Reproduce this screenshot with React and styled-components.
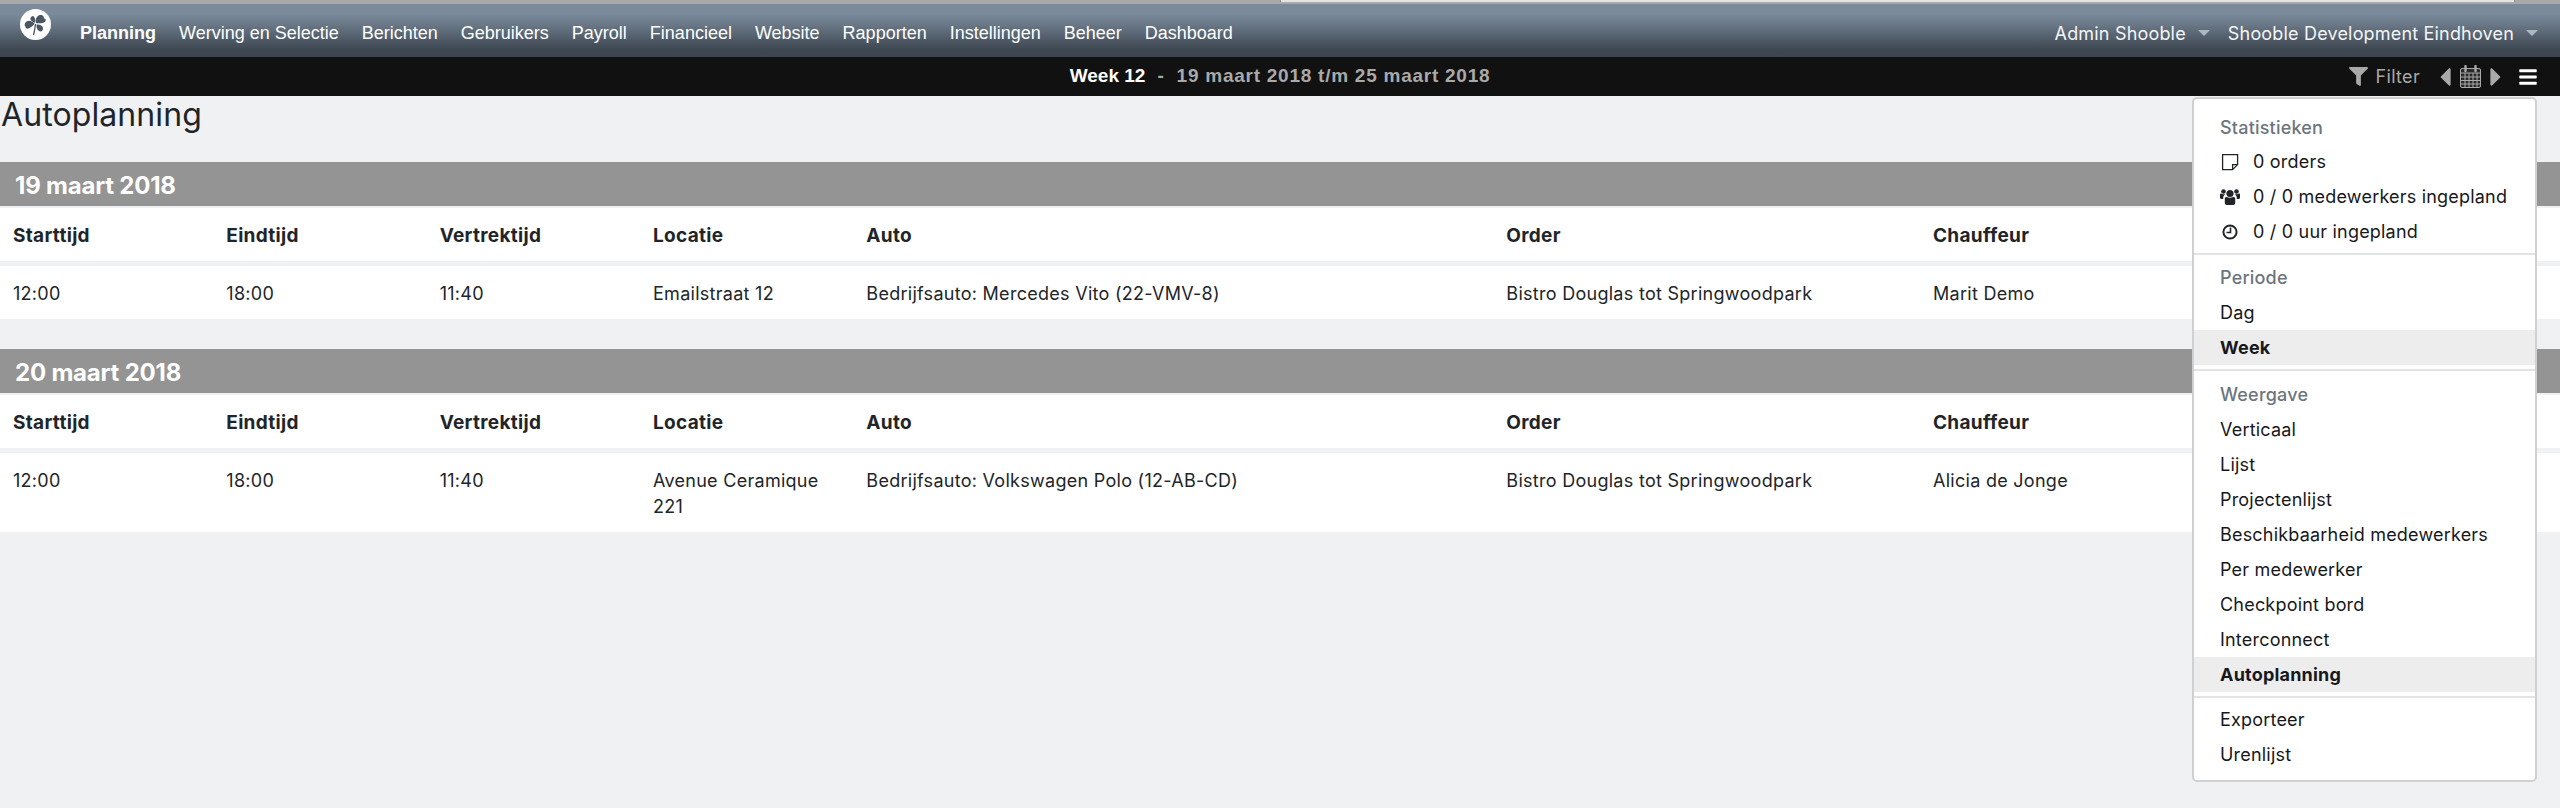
import React from "react";
import styled, { createGlobalStyle } from "styled-components";
import { FaFilter, FaCaretLeft, FaCaretRight, FaBars } from "react-icons/fa";

const GlobalStyle = createGlobalStyle`
  html, body {
    margin: 0;
    padding: 0;
    background: #f0f1f3;
    font-family: Inter, "Noto Sans", sans-serif;
    color: #212529;
  }
`;

const Page = styled.div`
  position: relative;
  height: 808px;
  overflow: hidden;
  background: #f0f1f3;
`;

const BrowserEdge = styled.div`
  display: flex;
  height: 4px;
  background: #a9a9a9;
`;

const EdgeTab = styled.div`
  margin-left: 1280px;
  width: 1233px;
  height: 2px;
  background: #e4e4e4;
  border-left: 1px solid #8f8f8f;
  border-right: 1px solid #8f8f8f;
`;

const NavBar = styled.nav`
  display: flex;
  align-items: center;
  height: 53px;
  padding: 0 22px 0 20px;
  background: linear-gradient(to bottom, #7b8b9c 0%, #7a8a9b 20%, #56626f 60%, #3f4852 85%, #3d4650 100%);
`;

const Logo = styled.svg`
  width: 31px;
  height: 31px;
  margin: -12px 29px 0 0;
`;

const NavLink = styled.a`
  font-family: "Liberation Sans", Arial, sans-serif;
  font-size: 18px;
  font-weight: ${(p) => (p.$active ? 700 : 400)};
  color: #fff;
  margin-right: 23px;
  padding-top: 6px;
`;

const UserArea = styled.div`
  display: flex;
  align-items: center;
  margin-left: auto;
  gap: 18px;
  padding-top: 5px;
`;

const UserMenu = styled.div`
  display: flex;
  align-items: center;
  gap: 12px;
  font-size: 18px;
  letter-spacing: 0.18px;
  color: #f4f5f6;
`;

const Caret = styled.span`
  width: 0;
  height: 0;
  border-left: 6px solid transparent;
  border-right: 6px solid transparent;
  border-top: 6px solid #b0b6bd;
`;

const SubBar = styled.div`
  position: relative;
  display: flex;
  align-items: center;
  justify-content: center;
  height: 39px;
  background: #111;
`;

const WeekTitle = styled.div`
  font-family: "Liberation Sans", Arial, sans-serif;
  font-size: 19px;
  font-weight: 700;
  color: #a9a9a9;
  white-space: pre;
  letter-spacing: 0.75px;
  padding-bottom: 2px;
`;

const WeekStrong = styled.span`
  color: #fff;
  letter-spacing: 0;
`;

const SubTools = styled.div`
  position: absolute;
  right: 22px;
  top: 0;
  bottom: 0;
  display: flex;
  align-items: center;
  color: #a9a9a9;
`;

const FilterLabel = styled.span`
  font-size: 18px;
  letter-spacing: 0.3px;
  margin: 0 12px 0 8px;
  color: #a9a9a9;
`;

const ToolIcon = styled.span`
  display: flex;
  color: ${(p) => p.$color || "#a9a9a9"};
  margin: ${(p) => p.$margin || "0"};
`;

const Title = styled.h1`
  margin: 0;
  padding: 0 0 0 1px;
  height: 66px;
  font-size: 32px;
  font-weight: 400;
  line-height: 38px;
  letter-spacing: 0.1px;
  color: #212529;
`;

const DayBlock = styled.section`
  margin-bottom: 30px;
`;

const DayHeader = styled.h2`
  margin: 0 0 2px;
  height: 44px;
  padding-left: 15px;
  background: #949494;
  color: #fff;
  font-size: 24px;
  font-weight: 700;
  line-height: 47px;
  letter-spacing: -0.2px;
`;

const Row = styled.div`
  display: grid;
  grid-template-columns: repeat(12, 1fr);
  background: #fff;
  margin-bottom: ${(p) => (p.$head ? "5px" : "0")};
`;

const Cell = styled.div`
  grid-column: span ${(p) => p.$span || 1};
  padding: 15px 14px 12px 13px;
  font-size: ${(p) => (p.$head ? "19px" : "18px")};
  line-height: 26px;
  letter-spacing: ${(p) => (p.$head ? "0.3px" : "0.28px")};
  font-weight: ${(p) => (p.$head ? 700 : 400)};
`;

const DropMenu = styled.div`
  position: absolute;
  left: 2192px;
  top: 97px;
  width: 345px;
  height: 685px;
  box-sizing: border-box;
  padding: 11px 0 8px;
  background: #fff;
  border: 2px solid #cfd0d2;
  border-radius: 5px;
  font-size: 18px;
  letter-spacing: 0.2px;
`;

const MenuHead = styled.div`
  height: 35px;
  line-height: 35px;
  padding-left: 26px;
  color: #6c757d;
  font-weight: 500;
`;

const MenuItem = styled.div`
  display: flex;
  align-items: center;
  height: 35px;
  box-sizing: border-box;
  padding-left: 26px;
  padding-bottom: ${(p) => (p.$stat ? "2px" : "0")};
  color: #16181b;
  font-weight: ${(p) => (p.$active ? 700 : 400)};
  background: ${(p) => (p.$active ? "#ededed" : "transparent")};
`;

const StatIcon = styled.svg`
  flex: none;
  width: 20px;
  height: 20px;
  margin-right: 13px;
  color: #212529;
`;

const MenuDivider = styled.div`
  height: 2px;
  background: #e2e3e4;
  margin: ${(p) => p.$margin};
`;

const CalendarIcon = () => (
  <svg width="21" height="23" viewBox="0 0 21 23" fill="none" stroke="#a9a9a9" strokeWidth="1">
    <rect x="0.5" y="3.5" width="20" height="19" rx="1.5" fill="#2a2a2a" />
    <path d="M1 8h19M1 12h19M1 15.5h19M1 19h19M5 8v14M9 8v14M13 8v14M17 8v14" />
    <path d="M5.5 1v5M15.5 1v5" strokeWidth="2.4" strokeLinecap="round" />
  </svg>
);

const NoteIcon = () => (
  <StatIcon viewBox="0 0 20 20" fill="none" stroke="currentColor" strokeWidth="1.3">
    <path d="M2.6 2.6h15v10l-5 5h-10zM17.6 12.6h-5v5" />
  </StatIcon>
);

const UsersIcon = () => (
  <StatIcon viewBox="0 0 20 20" fill="currentColor">
    <circle cx="10" cy="6.5" r="3.6" />
    <circle cx="3.5" cy="4.5" r="2.3" />
    <circle cx="16.5" cy="4.5" r="2.3" />
    <path d="M4.8 11.5c0-1 1-1.7 2-1.5 1.9 1 4.5 1 6.4 0 1-.2 2 .5 2 1.5V16c0 1.3-1 2-2 2H6.8c-1 0-2-.7-2-2z" />
    <path d="M0 7.5c0-.6.5-1 1-.9 1 .6 2.8.7 4 .3-.3 1-1.3 1.6-1.700 3-.1.5-.1 1.2-.1 2.1H1.200c-.7 0-1.200-.5-1.200-1.200zM20 7.500c0-.6-.5-1-1-.9-1 .6-2.800.7-4 .3.3 1 1.300 1.600 1.700 3 .1.5.1 1.200.1 2.100h2c.7 0 1.200-.5 1.200-1.200z" />
  </StatIcon>
);

const ClockIcon = () => (
  <StatIcon viewBox="0 0 20 20" fill="none" stroke="currentColor" strokeWidth="2">
    <circle cx="10" cy="10" r="6.6" />
    <path d="M10.5 5.5v5h-4" strokeWidth="1.6" />
  </StatIcon>
);

const days = [
  {
    title: "19 maart 2018",
    location: "Emailstraat 12",
    car: "Bedrijfsauto: Mercedes Vito (22-VMV-8)",
    driver: "Marit Demo",
  },
  {
    title: "20 maart 2018",
    location: "Avenue Ceramique 221",
    car: "Bedrijfsauto: Volkswagen Polo (12-AB-CD)",
    driver: "Alicia de Jonge",
  },
];

const navItems = ["Werving en Selectie", "Berichten", "Gebruikers", "Payroll", "Financieel", "Website", "Rapporten", "Instellingen", "Beheer", "Dashboard"];
const viewItems = ["Verticaal", "Lijst", "Projectenlijst", "Beschikbaarheid medewerkers", "Per medewerker", "Checkpoint bord", "Interconnect"];

export default function App() {
  return (
    <Page>
      <GlobalStyle />
      <BrowserEdge>
        <EdgeTab />
      </BrowserEdge>
      <NavBar>
        <Logo viewBox="0 0 31 31">
          <circle cx="15.5" cy="15.5" r="15.5" fill="#fff" />
          <path d="M16 14c-1-4 1-7.5 4-8 2.5-.4 4.5 1.5 3.8 3.5 2-.3 2.7 1.8 1.2 3.2-2 1.7-5.5 2-9 1.3z" fill="#4b5663" />
          <path d="M14.5 14.5c-3-3-6-3.5-8-2-2 1.6-2.5 4-1 5.2 0 2 2 2.5 3.5 1.500 2.500-1.200 4.500-2.500 5.500-4.700z" fill="#4b5663" />
          <path d="M13 7c-2 .2-3 2-2.500 3.500.5 1.400 2.500 2.800 4.500 3.200.4-2 .3-4-.7-5.500-.4-.7-.9-1.200-1.300-1.200z" fill="#4b5663" />
          <path d="M16.5 15.5c3.5-.3 6 1 6.500 3.500.4 2.300-1.500 4-3.500 3.300-2.200-.8-3.300-3.800-3-6.800z" fill="#4b5663" />
          <path d="M15.5 15c-.5 4-1 7-2 11" stroke="#4b5663" strokeWidth="1.3" fill="none" />
        </Logo>
        <NavLink $active>Planning</NavLink>
        {navItems.map((item) => (
          <NavLink key={item}>{item}</NavLink>
        ))}
        <UserArea>
          <UserMenu>Admin Shooble <Caret /></UserMenu>
          <UserMenu>Shooble Development Eindhoven <Caret /></UserMenu>
        </UserArea>
      </NavBar>
      <SubBar>
        <WeekTitle><WeekStrong>Week 12</WeekStrong>{"  -  "}19 maart 2018 t/m 25 maart 2018</WeekTitle>
        <SubTools>
          <FaFilter size={19} />
          <FilterLabel>Filter</FilterLabel>
          <ToolIcon $margin="0 0 0 -2px"><FaCaretLeft size={30} /></ToolIcon>
          <CalendarIcon />
          <ToolIcon $margin="0 7px 0 0"><FaCaretRight size={30} /></ToolIcon>
          <ToolIcon $color="#fff"><FaBars size={20} /></ToolIcon>
        </SubTools>
      </SubBar>
      <Title>Autoplanning</Title>
      {days.map((day) => (
        <DayBlock key={day.title}>
          <DayHeader>{day.title}</DayHeader>
          <Row $head>
            <Cell $head>Starttijd</Cell>
            <Cell $head>Eindtijd</Cell>
            <Cell $head>Vertrektijd</Cell>
            <Cell $head>Locatie</Cell>
            <Cell $head $span={3}>Auto</Cell>
            <Cell $head $span={2}>Order</Cell>
            <Cell $head $span={2}>Chauffeur</Cell>
          </Row>
          <Row>
            <Cell>12:00</Cell>
            <Cell>18:00</Cell>
            <Cell>11:40</Cell>
            <Cell>{day.location}</Cell>
            <Cell $span={3}>{day.car}</Cell>
            <Cell $span={2}>Bistro Douglas tot Springwoodpark</Cell>
            <Cell $span={2}>{day.driver}</Cell>
          </Row>
        </DayBlock>
      ))}
      <DropMenu>
        <MenuHead>Statistieken</MenuHead>
        <MenuItem $stat><NoteIcon />0 orders</MenuItem>
        <MenuItem $stat><UsersIcon />0 / 0 medewerkers ingepland</MenuItem>
        <MenuItem $stat><ClockIcon />0 / 0 uur ingepland</MenuItem>
        <MenuDivider $margin="3px 0 5px" />
        <MenuHead>Periode</MenuHead>
        <MenuItem>Dag</MenuItem>
        <MenuItem $active>Week</MenuItem>
        <MenuDivider $margin="4px 0 6px" />
        <MenuHead>Weergave</MenuHead>
        {viewItems.map((item) => (
          <MenuItem key={item}>{item}</MenuItem>
        ))}
        <MenuItem $active>Autoplanning</MenuItem>
        <MenuDivider $margin="4px 0 4px" />
        <MenuItem>Exporteer</MenuItem>
        <MenuItem>Urenlijst</MenuItem>
      </DropMenu>
    </Page>
  );
}
